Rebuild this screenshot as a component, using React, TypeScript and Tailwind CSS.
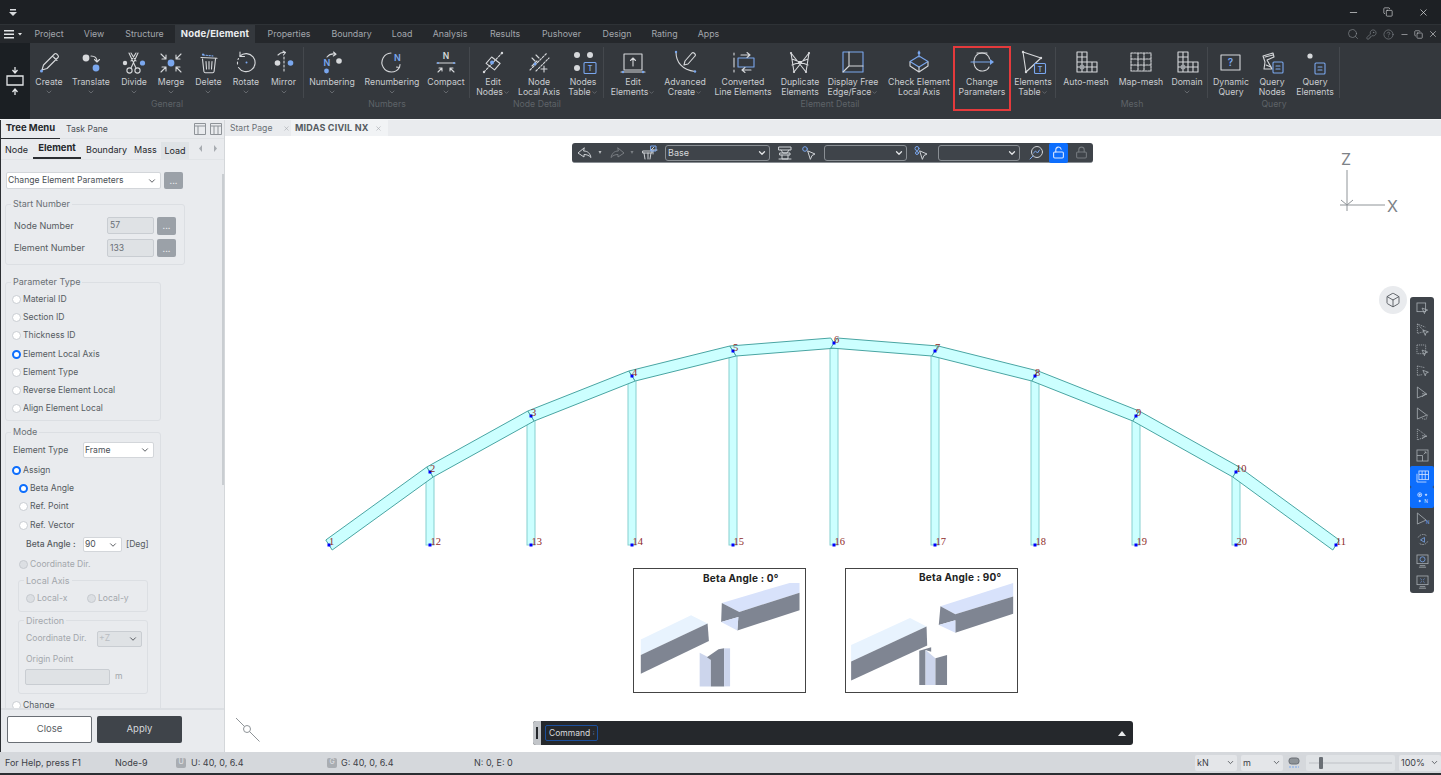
import type { ReactNode } from 'react'
import { Box, ChevronDown, CircleHelp, Copy, KeyRound, Lock, LockOpen, Minus, Search, X } from 'lucide-react'

const BLUE = '#7aa7ee'
const LINE = '#d6d8db'

const Ic = ({ children }: { children: ReactNode }) => (
  <svg
    viewBox="0 0 32 28"
    fill="none"
    stroke={LINE}
    strokeWidth="1.1"
    strokeLinecap="round"
    strokeLinejoin="round"
    className="h-[28px] w-[32px] shrink-0"
  >
    {children}
  </svg>
)

const Dot = ({ x, y, r = 3.4, c = BLUE }: { x: number; y: number; r?: number; c?: string }) => (
  <circle cx={x} cy={y} r={r} fill={c} stroke="none" />
)

const Letter = ({ x, y, t, c = BLUE, size = 9 }: { x: number; y: number; t: string; c?: string; size?: number }) => (
  <text x={x} y={y} fontSize={size} fontWeight="600" fill={c} stroke="none" textAnchor="middle" fontFamily="Inter">
    {t}
  </text>
)

type RibbonItem = {
  w: string
  lines: string[]
  chevron?: 'below' | 'inline'
  marked?: boolean
  icon: ReactNode
}

type RibbonGroup = { w: string; label: string; items: RibbonItem[] }

const groups: RibbonGroup[] = [
  {
    w: 'w-[274px]',
    label: 'General',
    items: [
      {
        w: 'w-[38px]',
        lines: ['Create'],
        chevron: 'below',
        icon: (
          <Ic>
            <path d="M9 22l1.5-5L21.5 6a1.6 1.6 0 0 1 2.2 0l1.3 1.3a1.6 1.6 0 0 1 0 2.2L14 20.5zM19.5 8l4.5 4.5" />
            <Dot x={8.5} y={23} r={1.5} />
          </Ic>
        ),
      },
      {
        w: 'w-[46px]',
        lines: ['Translate'],
        chevron: 'below',
        icon: (
          <Ic>
            <Dot x={11} y={10} c={LINE} />
            <path d="M16 8c4 0 6 2 6 5.5M19.5 11.5l2.5 2.5 2.5-2.5" />
            <Dot x={21} y={20} />
          </Ic>
        ),
      },
      {
        w: 'w-[40px]',
        lines: ['Divide'],
        chevron: 'below',
        icon: (
          <Ic>
            <circle cx="11.5" cy="22.5" r="2.6" />
            <circle cx="19.5" cy="22.5" r="2.6" />
            <path d="M13 20L20 5M18 20L11 5M13 5l5 8M18 5l-5 8" />
            <Dot x={24.5} y={15} r={2.6} />
            <Dot x={7} y={15} r={2.2} c={LINE} />
          </Ic>
        ),
      },
      {
        w: 'w-[34px]',
        lines: ['Merge'],
        chevron: 'below',
        icon: (
          <Ic>
            <Dot x={16} y={15} />
            <path d="M6 6l5 5M11 7v4H7M26 6l-5 5M21 7v4h4M6 24l5-5M7 19h4v4M26 24l-5-5M25 19h-4v4" />
          </Ic>
        ),
      },
      {
        w: 'w-[41px]',
        lines: ['Delete'],
        chevron: 'below',
        icon: (
          <Ic>
            <path d="M8 9.5l16 .8M9.5 11l1.4 12.5a1.5 1.5 0 0 0 1.5 1.2h7.2a1.5 1.5 0 0 0 1.5-1.2L22.5 11M13 13.5l.5 7.5M16 13.5v7.5M19 13.5l-.5 7.5" />
            <path d="M10 7l10 1" stroke={BLUE} strokeDasharray="1.5 1.5" />
            <Dot x={10} y={6.5} r={1.1} />
          </Ic>
        ),
      },
      {
        w: 'w-[34px]',
        lines: ['Rotate'],
        chevron: 'below',
        icon: (
          <Ic>
            <path d="M10 8a9 9 0 1 1-1.5 11.5" />
            <path d="M10 4v4.5h4.5" />
            <path d="M7.5 16v-2M8 11.5l.5-1" />
            <Dot x={16.5} y={14.5} r={1} />
          </Ic>
        ),
      },
      {
        w: 'w-[41px]',
        lines: ['Mirror'],
        chevron: 'below',
        icon: (
          <Ic>
            <path d="M16 9v16" strokeDasharray="2 2" />
            <path d="M10 7c2-2 4-3 7-2.5M15 3l2.5 1.5L15.5 7" />
            <Dot x={9.5} y={15} r={2.8} c={LINE} />
            <Dot x={22.5} y={15} r={2.8} />
          </Ic>
        ),
      },
    ],
  },
  {
    w: 'w-[166px]',
    label: 'Numbers',
    items: [
      {
        w: 'w-[56px]',
        lines: ['Numbering'],
        chevron: 'below',
        icon: (
          <Ic>
            <Letter x={11} y={18} t="N" />
            <Dot x={10.5} y={23} r={2.4} />
            <path d="M11 9c2-2.5 5-3.5 8-3M17.5 4l2.5 2.2-2.7 1.8" />
            <Dot x={23} y={13} r={2.8} c={LINE} />
          </Ic>
        ),
      },
      {
        w: 'w-[64px]',
        lines: ['Renumbering'],
        chevron: 'below',
        icon: (
          <Ic>
            <path d="M15 5a9.5 9.5 0 1 0 8.5 14.5M20.5 19l3 .5.5-3" />
            <Letter x={21.5} y={13} t="N" />
          </Ic>
        ),
      },
      {
        w: 'w-[44px]',
        lines: ['Compact'],
        chevron: 'below',
        icon: (
          <Ic>
            <Letter x={16} y={11} t="N" c={LINE} size={8.5} />
            <path d="M7 15h18" />
            <Dot x={8} y={15} r={1} />
            <Dot x={24} y={15} r={1} />
            <path d="M8 24l4-4M12 23v-3H9M24 24l-4-4M20 23v-3h3" />
          </Ic>
        ),
      },
    ],
  },
  {
    w: 'w-[134px]',
    label: 'Node Detail',
    items: [
      {
        w: 'w-[46px]',
        lines: ['Edit', 'Nodes'],
        chevron: 'inline',
        icon: (
          <Ic>
            <path d="M7 24L25 5" strokeDasharray="2 1.5" />
            <path d="M10 15l6-6 8 7-6 6z" transform="translate(-1 0) rotate(-4 16 14)" />
            <Dot x={15} y={14.5} r={2} />
            <Dot x={7} y={24} r={1.2} c={LINE} />
            <Dot x={25} y={5} r={1.2} c={LINE} />
          </Ic>
        ),
      },
      {
        w: 'w-[46px]',
        lines: ['Node', 'Local Axis'],
        icon: (
          <Ic>
            <path d="M7 22L24 5M13 23L26 10" strokeDasharray="2 1.5" />
            <path d="M9 10l3 3M13 7l3 3M21 18v6M18 21h6M9 18l5-5" />
            <Dot x={12} y={16} r={1.4} />
          </Ic>
        ),
      },
      {
        w: 'w-[42px]',
        lines: ['Nodes', 'Table'],
        chevron: 'inline',
        icon: (
          <Ic>
            <Dot x={10} y={7} r={3} c={LINE} />
            <Dot x={23} y={7} r={3} c={LINE} />
            <Dot x={10} y={20} r={3} c={LINE} />
            <rect x="17" y="14.5" width="12" height="11" rx="1" stroke={BLUE} />
            <Letter x={23} y={23} t="T" size={7} />
          </Ic>
        ),
      },
    ],
  },
  {
    w: 'w-[452px]',
    label: 'Element Detail',
    items: [
      {
        w: 'w-[58px]',
        lines: ['Edit', 'Elements'],
        chevron: 'inline',
        icon: (
          <Ic>
            <rect x="7" y="6" width="18" height="16" />
            <path d="M16 18v-8M13.5 12.5l2.5-2.5 2.5 2.5M4 24h24" />
            <Dot x={6} y={24} r={1.2} />
            <Dot x={26} y={24} r={1.2} />
          </Ic>
        ),
      },
      {
        w: 'w-[46px]',
        lines: ['Advanced', 'Create'],
        chevron: 'inline',
        icon: (
          <Ic>
            <path d="M7 4c0 10 6 18 19 19.5" stroke={LINE} />
            <path d="M15 17l1-4 7-8a1.4 1.4 0 0 1 2 0l1 1a1.4 1.4 0 0 1 0 2l-7 8z" />
            <Dot x={7} y={4} r={1.2} />
            <Dot x={26} y={23.5} r={1.2} />
          </Ic>
        ),
      },
      {
        w: 'w-[70px]',
        lines: ['Converted', 'Line Elements'],
        icon: (
          <Ic>
            <path d="M7 5v2M7 10v9M7 22v2" />
            <rect x="11" y="10" width="16" height="9" stroke={BLUE} />
            <path d="M14 7h9M20 4.5L23 7l-3 2.5M24 22h-9M18 19.5L15 22l3 2.5" />
          </Ic>
        ),
      },
      {
        w: 'w-[44px]',
        lines: ['Duplicate', 'Elements'],
        icon: (
          <Ic>
            <path d="M7 5l3 19M25 5l-3 19M7 5l15 19M25 5L10 24M8 11l16 6M24 11L8 17" />
            <Dot x={7} y={5} r={1.1} c={LINE} />
            <Dot x={25} y={5} r={1.1} c={LINE} />
            <Dot x={10} y={24} r={1.1} c={LINE} />
            <Dot x={22} y={24} r={1.1} c={LINE} />
          </Ic>
        ),
      },
      {
        w: 'w-[62px]',
        lines: ['Display Free', 'Edge/Face'],
        chevron: 'inline',
        icon: (
          <Ic>
            <rect x="6" y="4" width="20" height="20" stroke={BLUE} />
            <path d="M12 4v14H26M12 18L6 24" />
          </Ic>
        ),
      },
      {
        w: 'w-[70px]',
        lines: ['Check Element', 'Local Axis'],
        icon: (
          <Ic>
            <path d="M16 8l9 5.5-9 5.5-9-5.5z" stroke={BLUE} />
            <path d="M7 14v4l9 6 9-6v-4M16 19v5" />
            <path d="M16 9V3" stroke={BLUE} />
            <Dot x={16} y={5} r={1.4} />
          </Ic>
        ),
      },
      {
        w: 'w-[56px]',
        lines: ['Change', 'Parameters'],
        marked: true,
        icon: (
          <Ic>
            <path d="M11 5h10" />
            <path d="M16 5c-5 0-8 4-8 9s3 9 8 9M16 5c4 0 7 3 7.500 6M23 19c-1 2.500-3.500 4-7 4" strokeDasharray="3 1" />
            <path d="M5 14h20" stroke={BLUE} />
            <path d="M24 11l4 3-4 3z" fill={BLUE} stroke="none" />
          </Ic>
        ),
      },
      {
        w: 'w-[46px]',
        lines: ['Elements', 'Table'],
        chevron: 'inline',
        icon: (
          <Ic>
            <path d="M6 4l18 6M6 4l3 20M9 24L24 10" />
            <Dot x={6} y={4} r={1.2} c={LINE} />
            <Dot x={24} y={10} r={1.2} c={LINE} />
            <Dot x={9} y={24} r={1.2} c={LINE} />
            <rect x="17.500" y="15.500" width="11" height="10" rx="1" stroke={BLUE} fill="#34383d" />
            <Letter x={23} y={23.500} t="T" size={7} />
          </Ic>
        ),
      },
    ],
  },
  {
    w: 'w-[152px]',
    label: 'Mesh',
    items: [
      {
        w: 'w-[60px]',
        lines: ['Auto-mesh'],
        icon: (
          <Ic>
            <path d="M7 4h10v20H7zM7 9h10M7 14h10M7 19h10M12 4v20M17 14h10v10H17zM22 14v10M17 19h10" />
            <Dot x={12} y={19} r={2.5} c="#9fa3a8" />
          </Ic>
        ),
      },
      {
        w: 'w-[50px]',
        lines: ['Map-mesh'],
        icon: (
          <Ic>
            <path d="M6 5h20v18H6zM6 11h20M6 17h20M13 5v18M19 5v18" strokeDasharray="2 1" />
          </Ic>
        ),
      },
      {
        w: 'w-[42px]',
        lines: ['Domain'],
        chevron: 'below',
        icon: (
          <Ic>
            <path d="M7 4h10v20H7zM7 9h10M7 14h10M7 19h10M12 4v20M17 14h10v10H17zM22 14v10M17 19h10" />
            <Dot x={12} y={19} r={2.5} c="#9fa3a8" />
          </Ic>
        ),
      },
    ],
  },
  {
    w: 'w-[132px]',
    label: 'Query',
    items: [
      {
        w: 'w-[46px]',
        lines: ['Dynamic', 'Query'],
        icon: (
          <Ic>
            <rect x="6" y="7" width="19" height="15" />
            <Letter x={15.500} y={18} t="?" size={10} />
          </Ic>
        ),
      },
      {
        w: 'w-[36px]',
        lines: ['Query', 'Nodes'],
        icon: (
          <Ic>
            <path d="M7 8l10-3 1 4-7 3 5 9H8l1-7z" />
            <path d="M9 9l8-2M10 17l5 2" />
            <rect x="17" y="14" width="10" height="11" rx="1" stroke={BLUE} fill="#34383d" />
            <path d="M20 18h4M20 21h4" stroke={BLUE} />
          </Ic>
        ),
      },
      {
        w: 'w-[50px]',
        lines: ['Query', 'Elements'],
        icon: (
          <Ic>
            <Dot x={11} y={8} r={2.6} c={LINE} />
            <rect x="16" y="15" width="10" height="11" rx="1" stroke={BLUE} />
            <path d="M19 19h4M19 22h4" stroke={BLUE} />
          </Ic>
        ),
      },
    ],
  },
]

const tabs = [
  { name: 'Project', w: 'w-[42px]' },
  { name: 'View', w: 'w-[48px]' },
  { name: 'Structure', w: 'w-[57px] pr-[4px]' },
  { name: 'Node/Element', w: 'w-[80px]', active: true },
  { name: 'Properties', w: 'w-[68px]' },
  { name: 'Boundary', w: 'w-[57px]' },
  { name: 'Load', w: 'w-[44px]' },
  { name: 'Analysis', w: 'w-[52px]' },
  { name: 'Results', w: 'w-[58px]' },
  { name: 'Pushover', w: 'w-[55px]' },
  { name: 'Design', w: 'w-[56px]' },
  { name: 'Rating', w: 'w-[39px]' },
  { name: 'Apps', w: 'w-[49px]' },
]

const Ribbon = () => (
  <div className="flex h-[76px] bg-[#34383d]">
    <div className="flex w-[30px] shrink-0 items-center justify-center bg-[#1b1f23]">
      <svg viewBox="0 0 18 30" className="h-[30px] w-[18px]" fill="none" stroke="#e4e6e8" strokeWidth="1.3">
        <path d="M9 1v5M6.500 4L9 7l2.500-3M1 10h16v9H1zM9 29v-5M6.500 26L9 23l2.500 3" />
      </svg>
    </div>
    {groups.map((group) => (
      <div key={group.label} className={`${group.w} shrink-0`}>
        <div className="mt-[4px] flex h-[51px] border-r border-[#44484d]">
          {group.items.map((item) => (
            <div key={item.lines.join()} className={`${item.w} relative flex shrink-0 flex-col items-center pt-[1px]`}>
              <div className="flex w-full justify-center">{item.icon}</div>
              <div className="mt-[1px] flex flex-col items-center">
                {item.lines.map((line, index) => (
                  <span key={line} className="block whitespace-nowrap text-[8.700px] leading-[10px] text-[#c9ccd0]">
                    {line}
                    {item.chevron === 'inline' && index === item.lines.length - 1 && (
                      <ChevronDown className="inline-block size-[7px] text-[#7d8186]" />
                    )}
                  </span>
                ))}
                {item.chevron === 'below' && <ChevronDown className="mt-[1px] size-[8px] text-[#7d8186]" />}
              </div>
              {item.marked && (
                <div className="absolute -left-[1px] -top-[1px] h-[65px] w-[58px] border-2 border-[#e43a3c]" />
              )}
            </div>
          ))}
        </div>
        <div className="flex h-[14px] items-center justify-center text-[8.700px] text-[#5e6368]">{group.label}</div>
      </div>
    ))}
  </div>
)

const Radio = ({ on, off }: { on?: boolean; off?: boolean }) => (
  <span
    className={`mr-[2px] inline-block size-[9px] shrink-0 rounded-full ${
      on
        ? 'border-[2.5px] border-[#0d6efd] bg-white'
        : off
          ? 'border border-[#c6cacf] bg-[#dcdfe3]'
          : 'border border-[#c9cdd2] bg-white'
    }`}
  />
)

const RadioRow = ({ label, on, off, indent }: { label: string; on?: boolean; off?: boolean; indent?: boolean }) => (
  <div
    className={`flex h-[18.300px] items-center ${indent ? 'ml-[13px]' : 'ml-[6px]'} ${
      off ? 'text-[#a3a7ac]' : 'text-[#565b61]'
    }`}
  >
    <Radio on={on} off={off} />
    <span>{label}</span>
  </div>
)

const Dropdown = ({ w, h = 'h-[16px]', value, dim }: { w: string; h?: string; value: string; dim?: boolean }) => (
  <div
    className={`${w} ${h} flex items-center justify-between rounded-[2px] border pl-[1px] pr-[3px] ${
      dim ? 'border-[#c9cdd2] bg-[#dfe2e5] text-[#b9bdc2]' : 'border-[#d3d6da] bg-white text-[#4a4f55]'
    }`}
  >
    <span>{value}</span>
    <ChevronDown className="size-[10px] text-[#3c4046]" />
  </div>
)

const DotsButton = () => (
  <div className="ml-[3px] flex h-[18px] w-[19px] items-center justify-center rounded-[2px] bg-[#9ba1a8] text-[9px] leading-none text-[#e9ebee]">
    ...
  </div>
)

const Group = ({ title, dim, className, children }: { title: string; dim?: boolean; className: string; children: ReactNode }) => (
  <fieldset className={`rounded-[3px] border border-[#dcdfe3] ${className}`}>
    <legend className={`ml-[5px] px-[2px] text-[9px] leading-[12px] ${dim ? 'text-[#a3a7ac]' : 'text-[#6a6f75]'}`}>{title}</legend>
    {children}
  </fieldset>
)

const NumberRow = ({ label, value, h }: { label: string; value: string; h: string }) => (
  <div className={`flex ${h} items-center`}>
    <span className="w-[101px] pl-[8px] text-[9px] text-[#565b61]">{label}</span>
    <div className={`flex ${h} w-[47px] items-center rounded-[2px] border border-[#c9cdd2] bg-[#dfe2e5] pl-[2px] text-[#6a6f75]`}>
      {value}
    </div>
    <DotsButton />
  </div>
)

const SidePanel = () => (
  <div className="flex w-[224px] shrink-0 flex-col border-r border-[#d4d7da] bg-[#e9ebee] text-[8.600px]">
    <div className="flex h-[19px] shrink-0 items-center border-b border-[#dfe2e5]">
      <div className="flex h-[19px] w-[59px] items-center justify-center border-b border-[#2b2e32] text-[9.500px] font-bold text-[#24272b]">
        Tree Menu
      </div>
      <span className="ml-[6px] text-[#4a4f55]">Task Pane</span>
      <div className="ml-auto mr-[2px] flex gap-[4px]">
        <svg viewBox="0 0 12 12" className="size-[12px]" fill="none" stroke="#8e9398">
          <path d="M.5.5h11v11H.5zM.5 3h11M4 3v8.500" />
        </svg>
        <svg viewBox="0 0 12 12" className="size-[12px]" fill="none" stroke="#8e9398">
          <path d="M.5.5h11v11H.5zM.5 3h11M4 3v8.500M8 3v8.500" />
        </svg>
      </div>
    </div>
    <div className="flex h-[21px] shrink-0 items-end border-b border-[#e1e4e7] text-[9px] text-[#24272b]">
      <span className="mb-[3px] ml-[4px] w-[28px]">Node</span>
      <span className="flex h-[20px] w-[48px] items-center justify-center border-b-2 border-[#2b2e32] text-[9.500px] font-bold">
        Element
      </span>
      <span className="mb-[3px] ml-[5px] w-[48px]">Boundary</span>
      <span className="mb-[3px] w-[27px]">Mass</span>
      <span className="flex h-[17px] w-[28px] items-center justify-center bg-[#dfe3e6]">Load</span>
      <svg viewBox="0 0 18 8" className="mb-[6px] ml-[10px] h-[8px] w-[18px]" fill="#a8acb1" stroke="none">
        <path d="M3 0v7L0 3.500zM15 0v7l3-3.500z" />
      </svg>
    </div>
    <div className="relative h-[548px] shrink-0 overflow-hidden">
      <div className="absolute right-[0.500px] top-[14px] h-[311px] w-[2px] bg-[#c9cdd1]" />
      <div className="ml-[5px] mt-[12px] flex h-[17px] items-center">
        <Dropdown w="w-[155px]" h="h-[17px]" value="Change Element Parameters" />
        <div className="ml-[3px] flex h-[17px] w-[19px] items-center justify-center rounded-[2px] bg-[#9ba1a8] text-[9px] leading-none text-[#e9ebee]">
          ...
        </div>
      </div>
      <Group title="Start Number" className="ml-[4px] mt-[9px] w-[180px] pb-[7px] pt-[7px]">
        <NumberRow label="Node Number" value="57" h="h-[17px]" />
        <div className="mt-[5px]">
          <NumberRow label="Element Number" value="133" h="h-[18px]" />
        </div>
      </Group>
      <Group title="Parameter Type" className="ml-[4px] mt-[11px] w-[156px] pb-[2px] pt-[2px]">
        <RadioRow label="Material ID" />
        <RadioRow label="Section ID" />
        <RadioRow label="Thickness ID" />
        <RadioRow label="Element Local Axis" on />
        <RadioRow label="Element Type" />
        <RadioRow label="Reverse Element Local" />
        <RadioRow label="Align Element Local" />
      </Group>
      <Group title="Mode" className="ml-[4px] mt-[5px] w-[156px] pt-[4px]">
        <div className="flex h-[16px] items-center">
          <span className="w-[77px] pl-[7px] text-[#565b61]">Element Type</span>
          <Dropdown w="w-[71px]" value="Frame" />
        </div>
        <div className="mt-[3px]">
          <RadioRow label="Assign" on />
          <RadioRow label="Beta Angle" on indent />
          <RadioRow label="Ref. Point" indent />
          <RadioRow label="Ref. Vector" indent />
        </div>
        <div className="mt-[3px] flex h-[15px] items-center">
          <span className="w-[77px] whitespace-nowrap pl-[20px] font-medium text-[#565b61]">Beta Angle :</span>
          <Dropdown w="w-[39px]" h="h-[15px]" value="90" />
          <span className="ml-[4px] text-[#565b61]">[Deg]</span>
        </div>
        <div className="mt-[3px]">
          <RadioRow label="Coordinate Dir." off indent />
        </div>
        <Group title="Local Axis" dim className="ml-[12px] mt-[1px] w-[130px] pb-[3px] pt-[3px] text-[#a3a7ac]">
          <div className="flex h-[18px] items-center pl-[7px]">
            <Radio off />
            <span className="w-[50px]">Local-x</span>
            <Radio off />
            <span>Local-y</span>
          </div>
        </Group>
        <Group title="Direction" dim className="ml-[12px] mt-[3px] w-[130px] pb-[8px] pt-[4px] text-[#a3a7ac]">
          <div className="flex h-[16px] items-center pl-[7px]">
            <span className="w-[71px]">Coordinate Dir.</span>
            <Dropdown w="w-[45px]" value="+Z" dim />
          </div>
          <div className="mt-[5px] flex h-[16px] items-center pl-[7px]">Origin Point</div>
          <div className="mt-[1px] flex h-[16px] items-center pl-[6px]">
            <div className="h-[16px] w-[85px] rounded-[2px] border border-[#c9cdd2] bg-[#dfe2e5]" />
            <span className="ml-[5px]">m</span>
          </div>
        </Group>
        <div className="mt-[3px]">
          <RadioRow label="Change" />
        </div>
      </Group>
    </div>
    <div className="flex h-[44px] shrink-0 gap-[5px] border-t-2 border-[#dcdfe3] pl-[6px] pt-[6px] text-[9.500px]">
      <div className="flex h-[27px] w-[85px] items-center justify-center rounded-[2px] border border-[#6a6f75] bg-white text-[#5a5f65]">
        Close
      </div>
      <div className="flex h-[27px] w-[85px] items-center justify-center rounded-[2px] bg-[#3f444a] text-[#d5d8db]">
        Apply
      </div>
    </div>
  </div>
)

const DarkSelect = ({ w, value }: { w: string; value?: string }) => (
  <div className={`${w} flex h-[16px] items-center justify-between rounded-[3px] border border-[#8a8f94] pl-[2px] pr-[2px] text-[9px] text-[#d8dadd]`}>
    <span>{value}</span>
    <ChevronDown strokeWidth={3} className="size-[10px] text-[#e4e6e8]" />
  </div>
)

const ToolIcon = ({ className, children }: { className: string; children: ReactNode }) => (
  <svg
    viewBox="0 0 18 16"
    fill="none"
    stroke="#cfd2d6"
    strokeWidth="1"
    strokeLinejoin="round"
    strokeLinecap="round"
    className={`h-[16px] w-[18px] shrink-0 ${className}`}
  >
    {children}
  </svg>
)

const Caret = ({ className }: { className: string }) => (
  <svg viewBox="0 0 12 4" className={`h-[4px] w-[12px] shrink-0 ${className}`} fill="#b9bcc0">
    <path d="M4.500 0h3L6 3z" />
  </svg>
)

const FloatingBar = () => (
  <div className="absolute left-[347px] top-[23px] flex h-[20px] w-[521px] items-center rounded-[3px] border-b border-[#8a8f94] bg-[#3f444a] pl-[4px]">
    <ToolIcon className="">
      <path d="M8 3L2 8l6 4V9.500c3 0 5 1 7 3-1-4-3-6.500-7-6.500z" />
    </ToolIcon>
    <Caret className="" />
    <ToolIcon className="ml-[2px] opacity-40">
      <path d="M10 3l6 5-6 4V9.500c-3 0-5 1-7 3 1-4 3-6.500 7-6.500z" />
    </ToolIcon>
    <Caret className="opacity-50" />
    <ToolIcon className="ml-[2px]">
      <path d="M3 6h9v2H3zM4 8l1 6M11 8l-1 6M8 8v6M14 2l-3 3h6M13 5v4" />
      <rect x="11" y="1" width="5" height="5" stroke="#7aa7ee" />
    </ToolIcon>
    <div className="ml-[7px]">
      <DarkSelect w="w-[105px]" value="Base" />
    </div>
    <ToolIcon className="ml-[6px]">
      <path d="M3 2h12v3H3zM5 5l2 3h4l2-3M4 8h10v2H4zM6 10v4h6v-4M3 14h12" />
    </ToolIcon>
    <ToolIcon className="ml-[6px]">
      <circle cx="5" cy="4" r="2.300" stroke="#7aa7ee" />
      <path d="M8 6l7 3-3 1.500L10.500 14z" />
    </ToolIcon>
    <div className="ml-[6px]">
      <DarkSelect w="w-[83px]" />
    </div>
    <ToolIcon className="ml-[5px]">
      <circle cx="5" cy="3.500" r="2" stroke="#7aa7ee" />
      <circle cx="5" cy="8" r="1.500" stroke="#7aa7ee" />
      <path d="M8 6l7 3-3 1.500L10.500 14z" />
    </ToolIcon>
    <div className="ml-[8px]">
      <DarkSelect w="w-[82px]" />
    </div>
    <ToolIcon className="ml-[7px]">
      <circle cx="10" cy="7" r="5.500" />
      <path d="M6.500 8l2-2 2 2 2-3M6 11l-3 3" stroke="#7aa7ee" />
    </ToolIcon>
    <div className="ml-[4px] flex h-[20px] w-[19px] items-center justify-center rounded-[2px] bg-[#0d6efd]">
      <LockOpen className="size-[13px] text-[#dbe7ff]" />
    </div>
    <div className="ml-[4px] flex w-[18px] justify-center">
      <Lock className="size-[13px] text-[#74797e]" />
    </div>
  </div>
)

const sideIcons: { key: string; active?: boolean; draw: ReactNode }[] = [
  { key: 'a', draw: <><rect x="2.500" y="2.500" width="11" height="11" /><path d="M9 9l7 2.500-3 1-1 3.500z" /></> },
  { key: 'b', draw: <><path d="M3 2.500v12l9-2.500zM3 2.500l10 4" strokeDasharray="1.500 1" /><path d="M10 10l7 2.500-3 1-1 3.500z" /></> },
  { key: 'c', draw: <><rect x="2.500" y="2.500" width="11" height="11" strokeDasharray="1.500 1" /><path d="M9 9l7 2.500-3 1-1 3.500z" /></> },
  { key: 'd', draw: <><path d="M3 2.500v12M3 2.500l9 2M3 14.500l6-1" strokeDasharray="1.500 1" /><path d="M10 8l7 2.500-3 1-1 3.500z" /></> },
  { key: 'e', draw: <><path d="M3 2.500v14l12-5zM9 11l6 1M9 15l5-4" /></> },
  { key: 'f', draw: <><path d="M3 2.500v14l12-5z" /><path d="M9 16l5 1 2-6" strokeDasharray="1.500 1" /></> },
  { key: 'g', draw: <><path d="M3 2.500v14l12-5z" strokeDasharray="1.500 1" /><path d="M9 11l6 1M9 15l5-4" /></> },
  { key: 'h', draw: <><rect x="2.500" y="2.500" width="14" height="14" /><path d="M2.500 9.500h7v7M11 8l3-3M12 5h2v2" /></> },
  { key: 'i', active: true, draw: <><rect x="5" y="2.500" width="12" height="11" /><path d="M2.500 6v10.500h12M5 7h12M9 2.500v11M13 2.500v11" /></> },
  {
    key: 'j',
    active: true,
    draw: (
      <>
        <circle cx="6" cy="6" r="2.500" />
        <circle cx="6" cy="6" r=".8" fill="#dbe7ff" />
        <circle cx="14" cy="6" r=".9" fill="#dbe7ff" />
        <circle cx="6" cy="14" r=".9" fill="#dbe7ff" />
        <text x="14" y="16" fontSize="6" fill="#dbe7ff" stroke="none" textAnchor="middle" fontFamily="Inter">N</text>
      </>
    ),
  },
  { key: 'k', draw: <><path d="M3 2.500v14l11-5z" /><text x="14" y="17" fontSize="6" fill="#7aa7ee" stroke="none" fontFamily="Inter">N</text></> },
  { key: 'l', draw: <><path d="M4 7a7 7 0 0 1 11-2M16 12a7 7 0 0 1-11 2" strokeDasharray="2 1" /><path d="M7 10l5-3v6z" stroke="#7aa7ee" /></> },
  { key: 'm', draw: <><rect x="2.500" y="2.500" width="14" height="11" /><circle cx="9.500" cy="8" r="3.200" stroke="#7aa7ee" /><path d="M6 16h7M5 18h9" /></> },
  { key: 'n', draw: <><rect x="2.500" y="2.500" width="14" height="11" /><path d="M7 6l1.500 1.500M12 6l-1.500 1.500M7 11l1.500-1.500M12 11l-1.500-1.500" stroke="#7aa7ee" /><path d="M6 16h7M5 18h9" /></> },
]

const SideBar = () => (
  <div className="absolute left-[1185px] top-[177px] flex w-[24px] flex-col rounded-[3px] bg-[#3f444a] pb-[1px] pt-[1px]">
    {sideIcons.map((icon) => (
      <div
        key={icon.key}
        className={`flex h-[21px] items-center justify-center rounded-[2px] ${icon.active ? 'bg-[#0d6efd]' : ''}`}
      >
        <svg
          viewBox="0 0 19 19"
          fill="none"
          stroke={icon.active ? '#dbe7ff' : '#aab0b6'}
          strokeWidth="1"
          className="size-[15px]"
        >
          {icon.draw}
        </svg>
      </div>
    ))}
  </div>
)

// node positions read off the picture, in page pixels
const chord = [
  [329, 545],
  [430, 472],
  [531, 416],
  [632, 376],
  [733, 351],
  [834, 343],
  [935, 351],
  [1035, 376],
  [1136, 416],
  [1236, 472],
  [1336, 545],
]
const feet = [430, 531, 632, 733, 834, 935, 1035, 1136, 1236]

const Model = () => (
  <svg viewBox="225 120 1216 632" className="absolute inset-0 h-[632px] w-[1216px]">
    {chord.slice(1, -1).map(([x, y]) => (
      <rect key={x} x={x - 4} y={y} width="8" height={545 - y} fill="#ccffff" stroke="#86cfcf" strokeWidth="1" />
    ))}
    {chord.slice(0, -1).map(([x, y], index) => {
      const [nx, ny] = chord[index + 1]
      const dx = x < 834 ? 3.200 : -3.200
      const dxNext = nx <= 834 ? 3.200 : -3.200
      return (
        <polygon
          key={x}
          points={`${x - dx},${y - 5} ${nx - dxNext},${ny - 5} ${nx + dxNext},${ny + 5} ${x + dx},${y + 5}`}
          fill="#ccffff"
          stroke="#49a5a3"
          strokeWidth="1"
        />
      )
    })}
    {chord.map(([x, y]) => (
      <rect key={x} x={x - 1.500} y={y - 1.500} width="3" height="3" fill="#0000ff" />
    ))}
    {feet.map((x) => (
      <rect key={x} x={x - 1.500} y={543.500} width="3" height="3" fill="#0000ff" />
    ))}
    <g fontFamily="Liberation Serif" fontSize="10.500" fill="#8e2a2a">
      {chord.map(([x, y], index) => (
        <text key={x} x={x} y={y - 0.5}>
          {index + 1}
        </text>
      ))}
      {feet.map((x, index) => (
        <text key={x} x={x + 0.5} y={545}>
          {index + 12}
        </text>
      ))}
    </g>
    <g stroke="#8f9498" strokeWidth="1" fill="none">
      <path d="M1347 170v41M1340 205h45M1341 200l6 5 6-5" />
      <path d="M236 718l8.500 8.500M249.500 731.500l10 10" />
      <circle cx="247" cy="729" r="3.500" />
    </g>
    <g fontFamily="Inter" fontSize="16" fill="#7d8287">
      <text x="1341" y="165">Z</text>
      <text x="1387" y="212">X</text>
    </g>
  </svg>
)

const BetaFigure = ({ label, textX, textY, className, children }: { label: string; textX: number; textY: number; className: string; children: ReactNode }) => (
  <div className={`absolute top-[448px] h-[125px] border border-[#444] bg-white ${className}`}>
    <svg viewBox="0 0 516 372" className="size-full">
      {children}
    </svg>
    <span
      className="absolute whitespace-nowrap text-[10px] font-bold leading-none tracking-[0.2px] text-[#222]"
      style={{ left: textX, top: textY }}
    >
      {label}
    </span>
  </div>
)

const Canvas = () => (
  <div className="relative min-w-0 flex-1">
    <div className="absolute left-0 top-0 z-10 flex h-[16px] w-full items-center bg-[#e9ebee] text-[8.600px]">
      <div className="flex h-[16px] w-[66px] items-center whitespace-nowrap pl-[5px] text-[#6a6f75]">
        Start Page
        <X className="ml-[11px] size-[7px] text-[#a3a7ac]" />
      </div>
      <div className="flex h-[16px] w-[97px] items-center whitespace-nowrap bg-[#f1f3f5] pl-[4px] text-[9px] font-bold tracking-[0.2px] text-[#565b61]">
        MIDAS CIVIL NX
        <X className="ml-[6px] size-[7px] text-[#a3a7ac]" />
      </div>
    </div>
    <Model />
    <FloatingBar />
    <div className="absolute left-[1154px] top-[166px] flex size-[28px] items-center justify-center rounded-full bg-[#e9ebee]">
      <Box strokeWidth={1.2} className="size-[16px] text-[#3f444a]" />
    </div>
    <SideBar />
    <BetaFigure label="Beta Angle : 0°" textX={69} textY={4} className="left-[408px] w-[173px]">
      <polygon points="265,103 470,42 500,42 500,72 318,130" fill="#d8e2fb" />
      <polygon points="265,103 318,130 500,72 500,125 312,186 315,145 263,160" fill="#7f8592" />
      <polygon points="263,160 315,145 312,186" fill="#d8e2fb" />
      <polygon points="20,213 172,140 222,165 20,260" fill="#e8f3fe" />
      <polygon points="20,260 222,165 226,218 20,317" fill="#7f8592" />
      <polygon points="198,253 220,265 232,275 232,355 198,355" fill="#ccd5ec" />
      <polygon points="220,267 255,243 272,240 272,355 232,355 232,275" fill="#7f8592" />
      <polygon points="272,240 290,240 290,355 272,355" fill="#ccd5ec" />
    </BetaFigure>
    <BetaFigure label="Beta Angle : 90°" textX={73} textY={3} className="left-[620px] w-[173px]">
      <polygon points="285,113 505,42 505,83 330,137" fill="#d8e2fb" />
      <polygon points="285,113 330,137 505,83 505,135 330,193 330,155 280,169" fill="#7f8592" />
      <polygon points="280,169 330,155 330,193" fill="#d8e2fb" />
      <polygon points="15,230 193,148 243,174 15,280" fill="#e8f3fe" />
      <polygon points="15,280 243,174 245,231 15,337" fill="#7f8592" />
      <polygon points="221,247 257,237 257,250 240,245 240,351 221,351" fill="#7f8592" />
      <polygon points="240,245 270,270 270,351 240,351" fill="#ccd5ec" />
      <polygon points="270,270 305,260 305,351 270,351" fill="#7f8592" />
    </BetaFigure>
    <div className="absolute left-[308px] top-[601px] flex h-[24px] w-[600px] items-center overflow-hidden rounded-[3px] bg-[#25282c]">
      <div className="flex h-[24px] w-[8px] items-center justify-center bg-[#c2c5c9]">
        <div className="h-[12px] w-[2px] bg-[#25282c]" />
      </div>
      <div className="ml-[4px] flex h-[16px] w-[53px] items-center rounded-[2px] border border-[#1b4f9c] pl-[3px] text-[8.500px] text-[#d8dadd]">
        Command
        <span className="ml-[3px] text-[5px] leading-[5px] text-[#8fb4ee]">⁝</span>
      </div>
      <svg viewBox="0 0 8 5" className="ml-auto mr-[7px] h-[5px] w-[8px]" fill="#e8eaec">
        <path d="M4 0l4 5H0z" />
      </svg>
    </div>
  </div>
)

const StatusBox = ({ w, label }: { w: string; label: string }) => (
  <div className={`${w} flex h-[16px] items-center justify-between rounded-[2px] bg-[#e4e6e9] pl-[2px] pr-[2px]`}>
    <span>{label}</span>
    <ChevronDown className="size-[9px] text-[#3c4046]" />
  </div>
)

const Badge = ({ t }: { t: string }) => (
  <span className="flex size-[10px] items-center justify-center rounded-[2px] bg-[#a9adb2] text-[7px] text-[#e4e6e9]">{t}</span>
)

const StatusBar = () => (
  <div className="flex h-[21px] items-center bg-[#d5d8dc] text-[9px] text-[#3c4046]">
    <span className="w-[115px] pl-[5px]">For Help, press F1</span>
    <span className="w-[61px]">Node-9</span>
    <Badge t="U" />
    <span className="ml-[5px] w-[136px]">U: 40, 0, 6.4</span>
    <Badge t="G" />
    <span className="ml-[4px] w-[133px]">G: 40, 0, 6.4</span>
    <span className="w-[100px]">N: 0, E: 0</span>
    <div className="ml-auto flex items-center gap-[4px]">
      <StatusBox w="w-[42px]" label="kN" />
      <StatusBox w="w-[42px]" label="m" />
      <svg viewBox="0 0 14 14" className="size-[14px]" fill="none" stroke="#6a6f75">
        <rect x="2" y="2" width="10" height="6" rx="2.500" fill="#8e9398" />
        <path d="M2 11h10" stroke="#7aa7ee" strokeDasharray="2 1" />
      </svg>
      <div className="ml-[1px] flex h-[16px] w-[89px] items-center rounded-[2px] bg-[#e0e3e6] pl-[3px] pr-[3px]">
        <div className="relative h-[2px] w-full bg-[#cfd2d6]">
          <div className="absolute left-[10px] top-[-5px] h-[12px] w-[4px] rounded-[1px] bg-[#6a6f75]" />
        </div>
      </div>
      <StatusBox w="w-[42px]" label="100%" />
    </div>
  </div>
)

export default function App() {
  return (
    <div className="flex h-[775px] w-[1441px] flex-col overflow-hidden bg-white [font-family:Inter,sans-serif]">
      <div className="flex h-[25px] shrink-0 items-center border-b border-[#2e3236] bg-[#1d2024] text-[#e0e2e4]">
        <svg viewBox="0 0 8 7" className="ml-[9px] h-[7px] w-[8px]" fill="#d8dadd">
          <path d="M1 0h6v1.500H1zM0 3h8L4 7z" />
        </svg>
        <div className="ml-auto flex items-center">
          <Minus strokeWidth={1.5} className="size-[11px]" />
          <Copy strokeWidth={1.5} className="ml-[24px] size-[10px]" />
          <X strokeWidth={1.5} className="ml-[25px] mr-[12px] size-[11px]" />
        </div>
      </div>
      <div className="flex h-[18px] shrink-0 items-center bg-[#25282c] text-[8.800px] text-[#a3a7ac]">
        <div className="flex w-[28px] items-center pl-[4px]">
          <svg viewBox="0 0 19 9" className="h-[9px] w-[19px]" fill="#e4e6e8">
            <path d="M0 0h10v1.500H0zM0 3.500h10V5H0zM0 7h10v1.500H0zM14 3h4l-2 2.500z" />
          </svg>
        </div>
        {tabs.map((tab) => (
          <div
            key={tab.name}
            className={`${tab.w} flex h-[18px] shrink-0 items-center justify-center ${
              tab.active ? 'bg-[#34383d] text-[9.500px] font-bold tracking-[0.2px] text-[#eceef0]' : ''
            }`}
          >
            {tab.name}
          </div>
        ))}
        <div className="ml-auto flex items-center text-[#8e9398]">
          <Search strokeWidth={1.2} className="size-[12px]" />
          <KeyRound strokeWidth={1.2} className="ml-[7px] size-[11px]" />
          <CircleHelp strokeWidth={1.2} className="ml-[6px] size-[11px]" />
          <Minus strokeWidth={1.5} className="ml-[6px] size-[9px] text-[#d8dadd]" />
          <Copy strokeWidth={1.5} className="ml-[5px] size-[9px] text-[#d8dadd]" />
          <X strokeWidth={1.5} className="ml-[5px] mr-[3px] size-[10px] text-[#d8dadd]" />
        </div>
      </div>
      <Ribbon />
      <div className="h-[1px] shrink-0 bg-[#f4f5f6]" />
      <div className="flex h-[632px] shrink-0">
        <div className="w-[1px] shrink-0 bg-[#2b2e32]" />
        <SidePanel />
        <Canvas />
      </div>
      <StatusBar />
      <div className="h-[2px] shrink-0 bg-[#2b2e32]" />
    </div>
  )
}
